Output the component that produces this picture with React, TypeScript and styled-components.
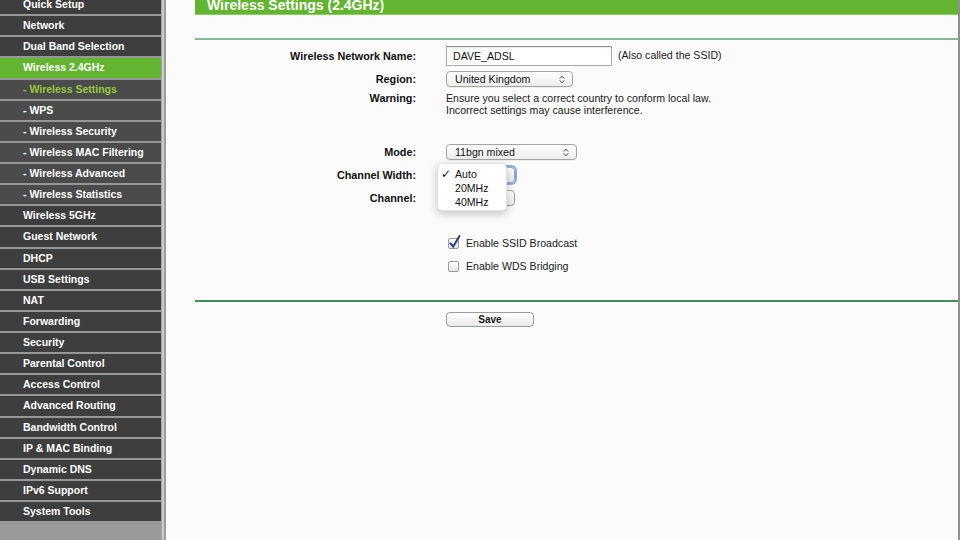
import React from 'react';
import styled, { createGlobalStyle } from 'styled-components';

const GlobalStyle = createGlobalStyle`
  html, body {
    margin: 0;
    padding: 0;
    background: #fbfbfb;
    font-family: "Liberation Sans", Arial, sans-serif;
  }
`;

const Page = styled.div`
  display: flex;
  width: 960px;
  height: 540px;
  overflow: hidden;
`;

const Sidebar = styled.nav`
  width: 161px;
  flex-shrink: 0;
  background: #9a9a9a;
  display: flex;
  flex-direction: column;
`;

const MenuList = styled.div`
  margin-top: -7px;
  display: flex;
  flex-direction: column;
`;

const MenuItem = styled.div<{ $sub?: boolean; $active?: boolean; $current?: boolean }>`
  box-sizing: border-box;
  height: 21.13px;
  border-top: 2px solid #979797;
  padding-left: 23px;
  line-height: 19px;
  font-size: 10.5px;
  font-weight: bold;
  white-space: nowrap;
  color: ${(p) => (p.$current ? '#96cc3a' : '#ffffff')};
  background: ${(p) => (p.$active ? '#63b430' : p.$sub ? '#4b4b4b' : '#3e3e3e')};
`;

const SideEdge = styled.div`
  width: 5px;
  flex-shrink: 0;
  background: linear-gradient(to right, #a6a6a6 0 1px, #cbcbcb 1px 3px, #9d9d9d 3px 5px);
`;

const Content = styled.main`
  flex: 1;
  padding-left: 29px;
  border-right: 2px solid #8f8f8f;
  background: #fbfbfb;
  display: flex;
  flex-direction: column;
`;

const TitleBar = styled.div`
  height: 14px;
  background: #63b430;
  border-bottom: 1px solid #8acb5e;
  padding-left: 12px;
  line-height: 10px;
  font-size: 14px;
  font-weight: bold;
  color: #ffffff;
  white-space: nowrap;
`;

const Rule = styled.div<{ $color: string; $gap: number }>`
  height: 2px;
  margin-top: ${(p) => p.$gap}px;
  background: ${(p) => p.$color};
`;

const Form = styled.div`
  display: flex;
  flex-direction: column;
`;

const Row = styled.div<{ $gap: number; $h: number }>`
  display: grid;
  grid-template-columns: 221px 1fr;
  column-gap: 30px;
  margin-top: ${(p) => p.$gap}px;
  min-height: ${(p) => p.$h}px;
  align-items: center;
`;

const Label = styled.div<{ $top?: boolean }>`
  text-align: right;
  font-size: 10.8px;
  font-weight: bold;
  color: #111;
  white-space: nowrap;
  align-self: ${(p) => (p.$top ? 'start' : 'center')};
  line-height: 12px;
`;

const Field = styled.div`
  display: flex;
  align-items: center;
  gap: 6px;
  position: relative;
  font-size: 10.6px;
  color: #1a1a1a;
`;

const Hint = styled.span`
  margin-bottom: 3px;
`;

const Note = styled.div`
  font-size: 10.6px;
  line-height: 12px;
  color: #1a1a1a;
`;

const TextInput = styled.div`
  box-sizing: border-box;
  width: 166px;
  height: 20px;
  border: 1px solid #a9a9a9;
  border-top-color: #8e8e8e;
  background: #fff;
  padding-left: 6px;
  line-height: 18px;
  font-size: 10.6px;
  color: #111;
  box-shadow: inset 0 1px 1px rgba(0, 0, 0, 0.08);
`;

const SelectBox = styled.div<{ $w: number; $focus?: boolean }>`
  box-sizing: border-box;
  width: ${(p) => p.$w}px;
  height: 16px;
  border: 1px solid #a4a4a4;
  border-radius: 4px;
  background: linear-gradient(#ffffff, #ececec);
  padding: 0 7px 0 8px;
  display: flex;
  align-items: center;
  justify-content: space-between;
  font-size: 10.6px;
  color: #111;
  box-shadow: ${(p) => (p.$focus ? '0 0 0 2px #82aee6' : '0 1px 0 rgba(0,0,0,0.05)')};
`;

const Menu = styled.div`
  position: absolute;
  left: -9px;
  top: -4px;
  width: 70px;
  height: 48px;
  box-sizing: border-box;
  padding-top: 3px;
  background: #ffffff;
  border-radius: 5px;
  border: 1px solid #e2e2e2;
  box-shadow: 0 3px 10px rgba(0, 0, 0, 0.22);
  z-index: 2;
`;

const MenuOption = styled.div`
  position: relative;
  height: 14px;
  line-height: 14px;
  padding-left: 17px;
  font-size: 10.6px;
  color: #111;
`;

const Tick = styled.span`
  position: absolute;
  left: 3px;
  top: 0;
  font-family: "DejaVu Sans", sans-serif;
  font-size: 12px;
  font-weight: bold;
`;

const CheckLine = styled.label`
  display: flex;
  align-items: center;
  gap: 7px;
  padding-left: 2px;
  font-size: 10.6px;
  color: #1a1a1a;
`;

const Box = styled.span`
  position: relative;
  box-sizing: border-box;
  width: 11px;
  height: 11px;
  border: 1px solid #9a9a9a;
  border-radius: 2px;
  background: linear-gradient(#ffffff, #e6e6e6);
  display: inline-block;
`;

const CheckMark = styled.svg`
  position: absolute;
  left: 0;
  top: -4px;
`;

const Button = styled.div`
  box-sizing: border-box;
  width: 88px;
  height: 15px;
  border: 1px solid #9c9c9c;
  border-radius: 4px;
  background: linear-gradient(#ffffff, #e9e9e9);
  text-align: center;
  line-height: 13px;
  font-size: 10px;
  font-weight: bold;
  color: #222;
`;

const Arrows = () => (
  <svg width="6" height="9" viewBox="0 0 6 9">
    <path d="M0.8 3.6 L3 1.2 L5.2 3.6" fill="none" stroke="#444" strokeWidth="1" />
    <path d="M0.8 5.4 L3 7.8 L5.2 5.4" fill="none" stroke="#444" strokeWidth="1" />
  </svg>
);

// value is left out where the open menu hides the select's text
const Select = ({ w, value, focus }: { w: number; value?: string; focus?: boolean }) => (
  <SelectBox $w={w} $focus={focus}>
    <span>{value}</span>
    <Arrows />
  </SelectBox>
);

const Checkbox = ({ checked }: { checked?: boolean }) => (
  <Box>
    {checked && (
      <CheckMark width="13" height="14" viewBox="0 0 13 14">
        <path d="M1.5 8.5 L4.2 11.5 L10.5 1" fill="none" stroke="#24427e" strokeWidth="2" strokeLinecap="round" />
      </CheckMark>
    )}
  </Box>
);

const menu = [
  { name: 'Quick Setup' },
  { name: 'Network' },
  { name: 'Dual Band Selection' },
  { name: 'Wireless 2.4GHz', active: true },
  { name: '- Wireless Settings', sub: true, current: true },
  { name: '- WPS', sub: true },
  { name: '- Wireless Security', sub: true },
  { name: '- Wireless MAC Filtering', sub: true },
  { name: '- Wireless Advanced', sub: true },
  { name: '- Wireless Statistics', sub: true },
  { name: 'Wireless 5GHz' },
  { name: 'Guest Network' },
  { name: 'DHCP' },
  { name: 'USB Settings' },
  { name: 'NAT' },
  { name: 'Forwarding' },
  { name: 'Security' },
  { name: 'Parental Control' },
  { name: 'Access Control' },
  { name: 'Advanced Routing' },
  { name: 'Bandwidth Control' },
  { name: 'IP & MAC Binding' },
  { name: 'Dynamic DNS' },
  { name: 'IPv6 Support' },
  { name: 'System Tools' },
];

export default function App() {
  return (
    <>
      <GlobalStyle />
      <Page>
        <Sidebar>
          <MenuList>
            {menu.map((m) => (
              <MenuItem key={m.name} $sub={m.sub} $active={m.active} $current={m.current}>
                {m.name}
              </MenuItem>
            ))}
          </MenuList>
        </Sidebar>
        <SideEdge />
        <Content>
          <TitleBar>Wireless Settings (2.4GHz)</TitleBar>
          <Rule $color="#83b99b" $gap={23} />
          <Form>
            <Row $gap={6} $h={20}>
              <Label>Wireless Network Name:</Label>
              <Field>
                <TextInput>DAVE_ADSL</TextInput>
                <Hint>(Also called the SSID)</Hint>
              </Field>
            </Row>
            <Row $gap={5} $h={16}>
              <Label>Region:</Label>
              <Field>
                <Select w={127} value="United Kingdom" />
              </Field>
            </Row>
            <Row $gap={5} $h={24}>
              <Label $top>Warning:</Label>
              <Note>
                Ensure you select a correct country to conform local law.
                <br />
                Incorrect settings may cause interference.
              </Note>
            </Row>
            <Row $gap={28} $h={16}>
              <Label>Mode:</Label>
              <Field>
                <Select w={131} value="11bgn mixed" />
              </Field>
            </Row>
            <Row $gap={7} $h={16}>
              <Label>Channel Width:</Label>
              <Field>
                <Select w={69} focus />
                <Menu>
                  <MenuOption>
                    <Tick>✓</Tick>Auto
                  </MenuOption>
                  <MenuOption>20MHz</MenuOption>
                  <MenuOption>40MHz</MenuOption>
                </Menu>
              </Field>
            </Row>
            <Row $gap={7} $h={16}>
              <Label>Channel:</Label>
              <Field>
                <Select w={69} />
              </Field>
            </Row>
            <Row $gap={31} $h={12}>
              <span />
              <CheckLine>
                <Checkbox checked />
                Enable SSID Broadcast
              </CheckLine>
            </Row>
            <Row $gap={11} $h={12}>
              <span />
              <CheckLine>
                <Checkbox />
                Enable WDS Bridging
              </CheckLine>
            </Row>
          </Form>
          <Rule $color="#3f8f60" $gap={28} />
          <Row $gap={10} $h={15}>
            <span />
            <Button>Save</Button>
          </Row>
        </Content>
      </Page>
    </>
  );
}
